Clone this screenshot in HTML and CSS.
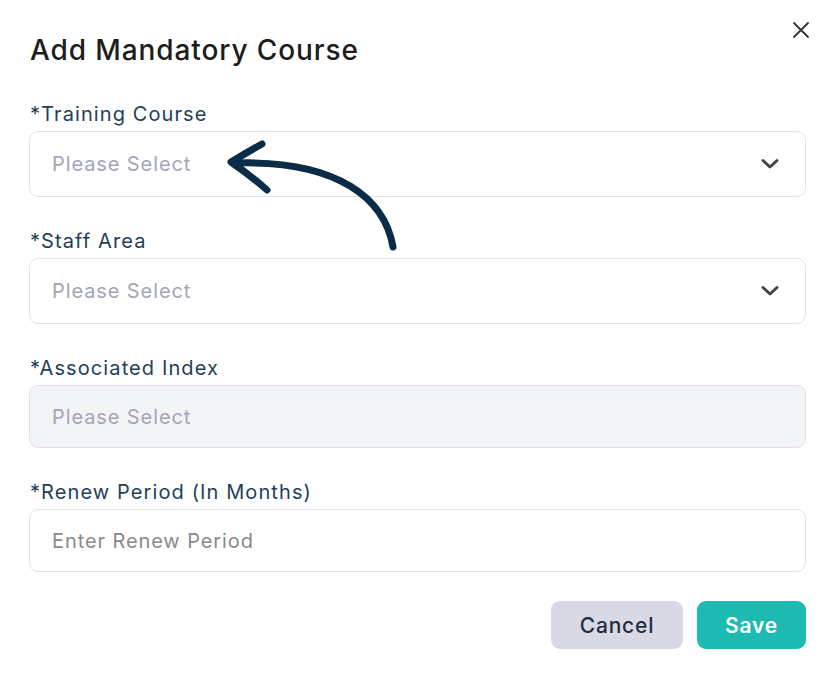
FILE: index.html
```html
<!DOCTYPE html>
<html lang="en">
<head>
    <meta charset="UTF-8">
    <meta name="viewport" content="width=device-width, initial-scale=1.0">
    <title>Add Mandatory Course</title>
    <link rel="stylesheet" href="styles.css">
</head>
<body>

<div class="modal">
    <div class="modal-header">
        <h2>Add Mandatory Course</h2>
        <button type="button" class="close" aria-label="Close">
            <svg width="18" height="18" viewBox="0 0 18 18"><path d="M2 2L16 16M16 2L2 16" stroke="#333" stroke-width="1.8" stroke-linecap="round"/></svg>
        </button>
    </div>

    <form class="form">
        <div class="field">
            <label>*Training Course</label>
            <div class="select">
                <span class="placeholder">Please Select</span>
                <svg class="chevron" width="20" height="12" viewBox="0 0 20 12"><path d="M3 2.5L10 9L17 2.5" fill="none" stroke="#444" stroke-width="3" stroke-linecap="round" stroke-linejoin="round"/></svg>
            </div>
        </div>

        <div class="field">
            <label>*Staff Area</label>
            <div class="select">
                <span class="placeholder">Please Select</span>
                <svg class="chevron" width="20" height="12" viewBox="0 0 20 12"><path d="M3 2.5L10 9L17 2.5" fill="none" stroke="#444" stroke-width="3" stroke-linecap="round" stroke-linejoin="round"/></svg>
            </div>
        </div>

        <div class="field">
            <label>*Associated Index</label>
            <div class="select disabled">
                <span class="placeholder">Please Select</span>
            </div>
        </div>

        <div class="field">
            <label>*Renew Period (In Months)</label>
            <input type="text" placeholder="Enter Renew Period">
        </div>

        <div class="actions">
            <button type="button" class="btn cancel">Cancel</button>
            <button type="button" class="btn save">Save</button>
        </div>
    </form>

    <svg class="pointer" width="837" height="678" viewBox="0 0 837 678">
        <path d="M393 247 C385 200 340 160 236 163" fill="none" stroke="#0b2c46" stroke-width="7" stroke-linecap="round"/>
        <path d="M262 144 Q246 153 231 162 Q250 175 267 190" fill="none" stroke="#0b2c46" stroke-width="7" stroke-linecap="round" stroke-linejoin="round"/>
    </svg>
</div>

</body>
</html>
```

FILE: styles.css
```css
body {
    margin: 0;
    background: #fff;
    font-family: 'Inter', 'Open Sans', sans-serif;
    color: #1a1a1a;
}
.modal {
    position: relative;
    width: 777px;
    padding: 20px 31px 0 29px;
}
.modal-header {
    display: flex;
    justify-content: space-between;
    align-items: flex-start;
}
.modal-header h2 {
    margin: 13px 0 0 1px;
    font-size: 28px;
    font-weight: 500;
    letter-spacing: 0.9px;
    color: #1d1d1d;
}
.close {
    background: none;
    border: none;
    padding: 0;
    margin: 1px -4px 0 0;
    cursor: pointer;
}
.form {
    margin-top: 35px;
}
.field {
    margin-bottom: 32px;
}
.field label {
    display: block;
    margin: 0 0 5px 1px;
    font-size: 20px;
    letter-spacing: 1.1px;
    color: #1e3f5a;
}
.select, .field input {
    box-sizing: border-box;
    width: 100%;
    height: 66px;
    padding: 0 25px 0 22px;
    border: 1.5px solid #e1e1ea;
    border-radius: 9px;
    background: #fff;
    display: flex;
    align-items: center;
    justify-content: space-between;
}
.placeholder, .field input::placeholder {
    font-size: 20px;
    letter-spacing: 0.9px;
    color: #a4a4b8;
}
.select.disabled {
    height: 63px;
    background: #f3f4f6;
}
.field input {
    height: 63px;
    font-family: inherit;
    font-size: 20px;
    letter-spacing: 0.9px;
    outline: none;
}
.field input::placeholder {
    color: #8a8a8a;
}
.actions {
    display: flex;
    justify-content: flex-end;
    gap: 14px;
    margin-top: -3px;
}
.btn {
    height: 48px;
    border: none;
    border-radius: 9px;
    font-family: inherit;
    font-size: 21px;
    letter-spacing: 0.8px;
    cursor: pointer;
}
.cancel {
    width: 132px;
    background: #d9d9e5;
    color: #1e2d40;
    font-weight: 500;
}
.save {
    width: 109px;
    background: #1cbab1;
    color: #fff;
    font-weight: 600;
}
.pointer {
    position: absolute;
    top: 0;
    left: 0;
    pointer-events: none;
}
```
